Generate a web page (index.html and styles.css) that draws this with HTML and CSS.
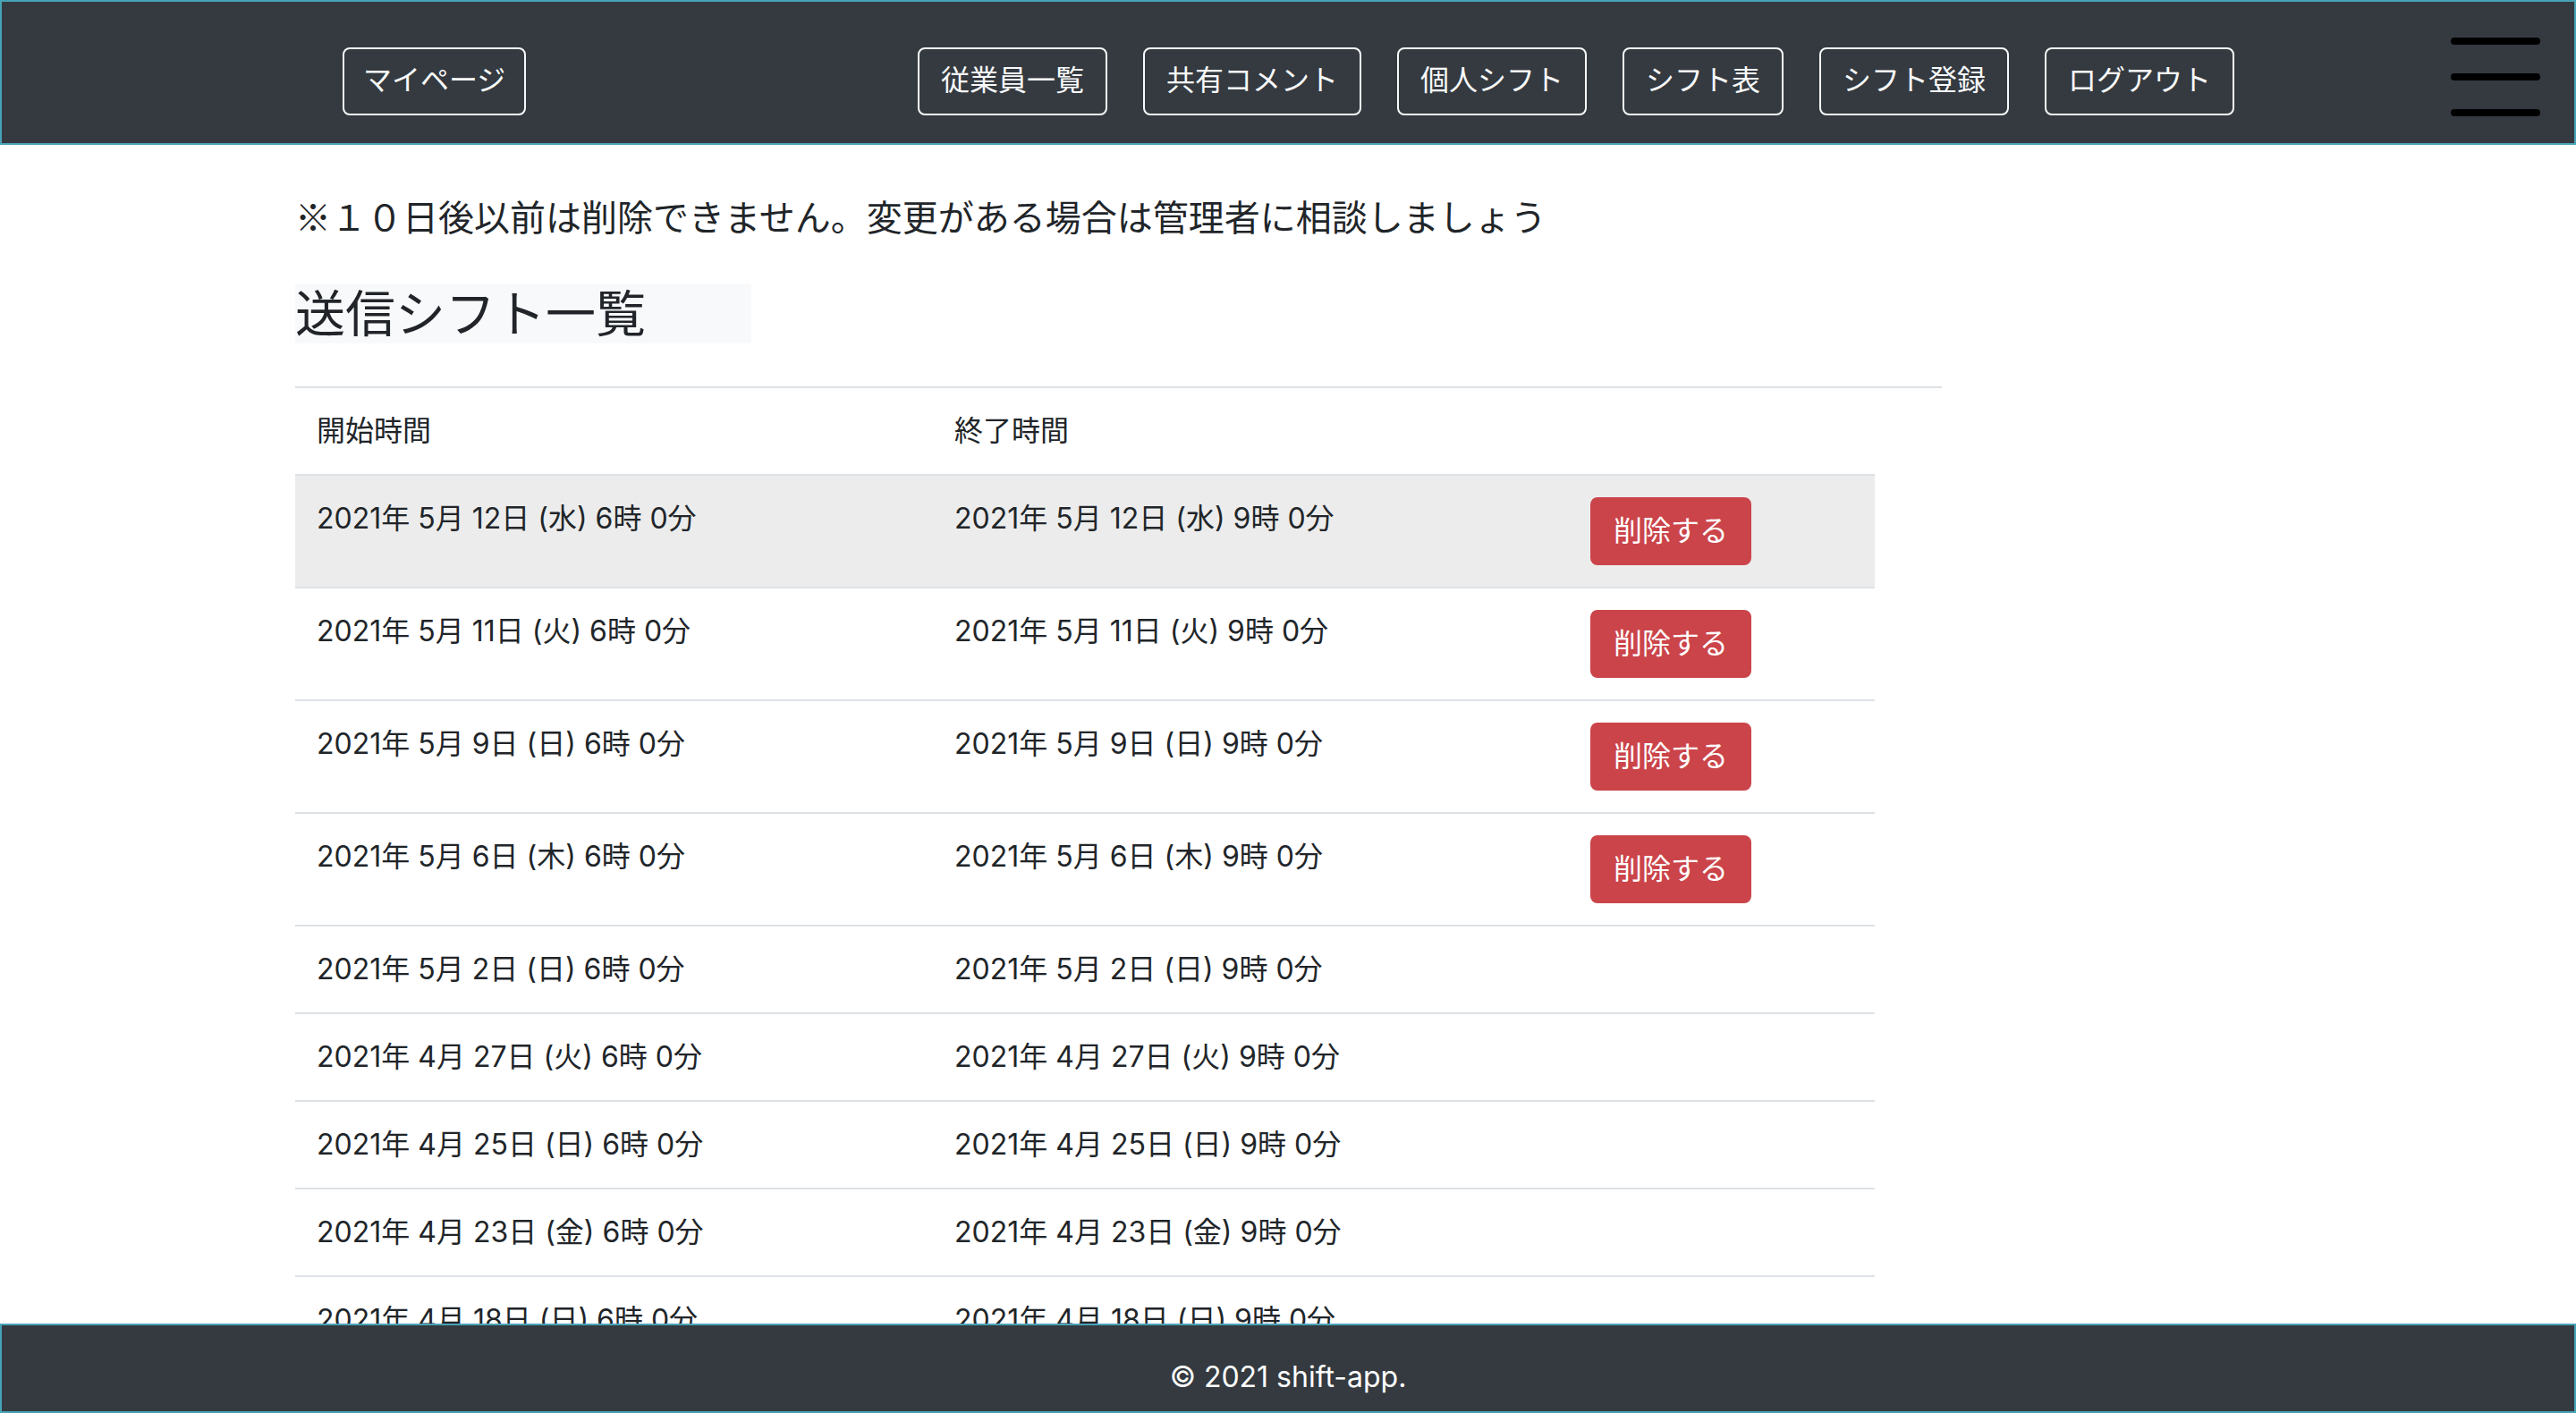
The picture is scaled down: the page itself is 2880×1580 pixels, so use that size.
FILE: index.html
```html
<!DOCTYPE html>
<html lang="ja">
<head>
<meta charset="utf-8">
<title>送信シフト一覧</title>
<link rel="stylesheet" href="styles.css">
</head>
<body>
<header class="site-header">
  <a class="nav-btn nav-btn-home" href="#">マイページ</a>
  <nav class="nav-group">
    <a class="nav-btn" href="#">従業員一覧</a>
    <a class="nav-btn" href="#">共有コメント</a>
    <a class="nav-btn" href="#">個人シフト</a>
    <a class="nav-btn" href="#">シフト表</a>
    <a class="nav-btn" href="#">シフト登録</a>
    <a class="nav-btn" href="#">ログアウト</a>
  </nav>
  <div class="hamburger"><span></span><span></span><span></span></div>
</header>

<main class="container">
  <p class="notice">※１０日後以前は削除できません。変更がある場合は管理者に相談しましょう</p>
  <h3 class="page-title">送信シフト一覧</h3>
  <div class="rule"></div>
  <table class="shift-table">
    <colgroup>
      <col class="col-start">
      <col class="col-end">
      <col class="col-action">
    </colgroup>
    <thead>
      <tr><th>開始時間</th><th>終了時間</th><th></th></tr>
    </thead>
    <tbody>
      <tr class="hovered"><td>2021年 5月 12日 (水) 6時 0分</td><td>2021年 5月 12日 (水) 9時 0分</td><td><a class="del-btn" href="#">削除する</a></td></tr>
      <tr><td>2021年 5月 11日 (火) 6時 0分</td><td>2021年 5月 11日 (火) 9時 0分</td><td><a class="del-btn" href="#">削除する</a></td></tr>
      <tr><td>2021年 5月 9日 (日) 6時 0分</td><td>2021年 5月 9日 (日) 9時 0分</td><td><a class="del-btn" href="#">削除する</a></td></tr>
      <tr><td>2021年 5月 6日 (木) 6時 0分</td><td>2021年 5月 6日 (木) 9時 0分</td><td><a class="del-btn" href="#">削除する</a></td></tr>
      <tr><td>2021年 5月 2日 (日) 6時 0分</td><td>2021年 5月 2日 (日) 9時 0分</td><td></td></tr>
      <tr><td>2021年 4月 27日 (火) 6時 0分</td><td>2021年 4月 27日 (火) 9時 0分</td><td></td></tr>
      <tr><td>2021年 4月 25日 (日) 6時 0分</td><td>2021年 4月 25日 (日) 9時 0分</td><td></td></tr>
      <tr><td>2021年 4月 23日 (金) 6時 0分</td><td>2021年 4月 23日 (金) 9時 0分</td><td></td></tr>
      <tr><td>2021年 4月 18日 (日) 6時 0分</td><td>2021年 4月 18日 (日) 9時 0分</td><td></td></tr>
      <tr><td>2021年 4月 16日 (金) 6時 0分</td><td>2021年 4月 16日 (金) 9時 0分</td><td></td></tr>
    </tbody>
  </table>
</main>

<footer class="site-footer">© 2021 shift-app.</footer>
</body>
</html>
```

FILE: styles.css
```css
* { box-sizing: border-box; }

html, body {
  margin: 0;
  padding: 0;
}

body {
  font-family: "Inter", "Noto Sans CJK JP", sans-serif;
  font-size: 32px;
  line-height: 48px;
  color: #212529;
  background: #ffffff;
  padding-bottom: 120px;
}

.site-header {
  display: flex;
  align-items: flex-start;
  height: 162px;
  background: #343a40;
  border: 2px solid #48a3b7;
  padding: 0 38px 0 381px;
}

.nav-btn {
  display: block;
  height: 76px;
  margin-top: 51px;
  padding: 8px 24px 16px;
  border: 2px solid #f8f9fa;
  border-radius: 8px;
  color: #f8f9fa;
  font-family: "Noto Sans CJK JP", sans-serif;
  font-size: 32px;
  line-height: 48px;
  text-decoration: none;
  white-space: nowrap;
}

.nav-btn-home {
  padding-left: 21px;
  padding-right: 21px;
}

.nav-group {
  display: flex;
  gap: 40px;
  margin-left: auto;
}

.hamburger {
  display: flex;
  flex-direction: column;
  gap: 32px;
  margin-top: 40px;
  margin-left: 242px;
  width: 100px;
}

.hamburger span {
  display: block;
  height: 8px;
  border-radius: 4px;
  background: #000000;
}

.container {
  padding: 55px 0 0 330px;
}

.notice {
  margin: 0 0 53px;
  font-family: "Noto Sans CJK JP", sans-serif;
  font-size: 40px;
  line-height: 48px;
  font-weight: 400;
}

.page-title {
  margin: 0 0 48px;
  width: 510px;
  height: 66px;
  padding-bottom: 8px;
  background: #f8f9fa;
  font-family: "Noto Sans CJK JP", sans-serif;
  font-size: 56px;
  line-height: 58px;
  font-weight: 400;
}

.rule {
  width: 1841px;
  height: 2px;
  background: #dee2e6;
}

.shift-table {
  width: 1766px;
  border-collapse: collapse;
  table-layout: fixed;
}

.col-start { width: 713px; }
.col-end { width: 711px; }
.col-action { width: 342px; }

.shift-table th,
.shift-table td {
  padding: 24px;
  text-align: left;
  vertical-align: top;
  white-space: nowrap;
  font-weight: 400;
}

.shift-table td {
  border-top: 2px solid #dee2e6;
}

.shift-table tr.hovered td {
  background: #ececec;
}

.del-btn {
  display: block;
  width: 180px;
  height: 76px;
  padding: 9px 24px 15px;
  border: 2px solid #cb444a;
  border-radius: 8px;
  background: #cb444a;
  color: #ffffff;
  font-family: "Noto Sans CJK JP", sans-serif;
  font-size: 32px;
  line-height: 48px;
  text-decoration: none;
}

.site-footer {
  position: fixed;
  left: 0;
  right: 0;
  bottom: 0;
  height: 100px;
  background: #343a40;
  border: 2px solid #48a3b7;
  color: #ffffff;
  font-size: 32px;
  line-height: 48px;
  text-align: center;
  padding-top: 34px;
}
```
